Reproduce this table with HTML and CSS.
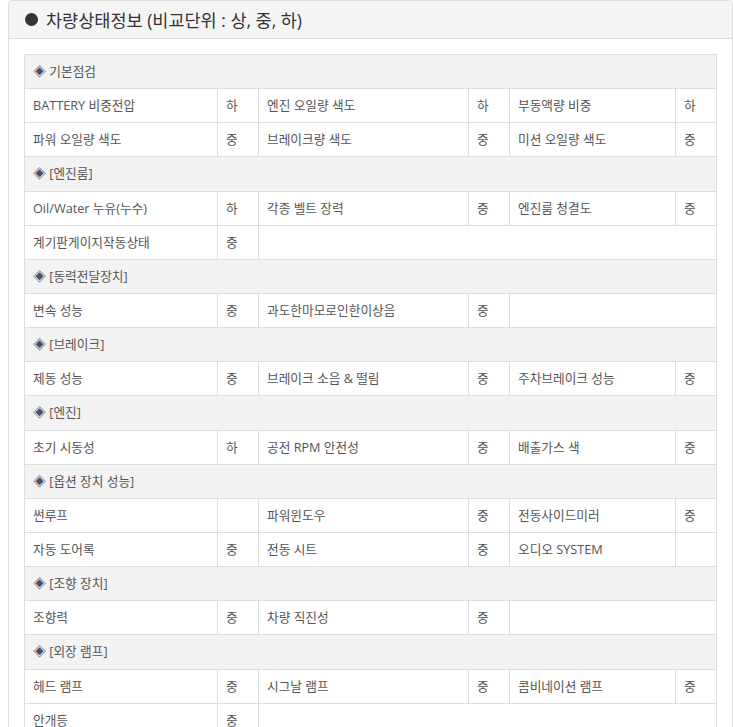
FILE: index.html
```html
<!DOCTYPE html>
<html lang="ko">
<head>
<meta charset="utf-8">
<title>차량상태정보</title>
<link rel="stylesheet" href="styles.css">
</head>
<body>
<div class="panel">
  <div class="panel-heading">
    <span class="bullet"></span>
    <h3 class="panel-title">차량상태정보 (비교단위 : 상, 중, 하)</h3>
  </div>
  <div class="panel-body">
    <table class="grid">
      <colgroup>
        <col class="c-name1"><col class="c-val"><col class="c-name2"><col class="c-val"><col class="c-name3"><col class="c-val">
      </colgroup>
      <tbody>
        <tr class="sec"><td colspan="6"><span class="dia">◈</span> 기본점검</td></tr>
        <tr><td>BATTERY 비중전압</td><td>하</td><td>엔진 오일량 색도</td><td>하</td><td>부동액량 비중</td><td>하</td></tr>
        <tr><td>파워 오일량 색도</td><td>중</td><td>브레이크량 색도</td><td>중</td><td>미션 오일량 색도</td><td>중</td></tr>
        <tr class="sec"><td colspan="6"><span class="dia">◈</span> [엔진룸]</td></tr>
        <tr><td>Oil/Water 누유(누수)</td><td>하</td><td>각종 벨트 장력</td><td>중</td><td>엔진룸 청결도</td><td>중</td></tr>
        <tr><td>계기판게이지작동상태</td><td>중</td><td colspan="4"></td></tr>
        <tr class="sec"><td colspan="6"><span class="dia">◈</span> [동력전달장치]</td></tr>
        <tr><td>변속 성능</td><td>중</td><td>과도한마모로인한이상음</td><td>중</td><td colspan="2"></td></tr>
        <tr class="sec"><td colspan="6"><span class="dia">◈</span> [브레이크]</td></tr>
        <tr><td>제동 성능</td><td>중</td><td>브레이크 소음 &amp; 떨림</td><td>중</td><td>주차브레이크 성능</td><td>중</td></tr>
        <tr class="sec"><td colspan="6"><span class="dia">◈</span> [엔진]</td></tr>
        <tr><td>초기 시동성</td><td>하</td><td>공전 RPM 안전성</td><td>중</td><td>배출가스 색</td><td>중</td></tr>
        <tr class="sec"><td colspan="6"><span class="dia">◈</span> [옵션 장치 성능]</td></tr>
        <tr><td>썬루프</td><td></td><td>파워윈도우</td><td>중</td><td>전동사이드미러</td><td>중</td></tr>
        <tr><td>자동 도어록</td><td>중</td><td>전동 시트</td><td>중</td><td>오디오 SYSTEM</td><td></td></tr>
        <tr class="sec"><td colspan="6"><span class="dia">◈</span> [조향 장치]</td></tr>
        <tr><td>조향력</td><td>중</td><td>차량 직진성</td><td>중</td><td colspan="2"></td></tr>
        <tr class="sec"><td colspan="6"><span class="dia">◈</span> [외장 램프]</td></tr>
        <tr><td>헤드 램프</td><td>중</td><td>시그날 램프</td><td>중</td><td>콤비네이션 램프</td><td>중</td></tr>
        <tr><td>안개등</td><td>중</td><td colspan="4"></td></tr>
      </tbody>
    </table>
  </div>
</div>
</body>
</html>
```

FILE: styles.css
```css
html, body {
  margin: 0;
  padding: 0;
  background: #fff;
}
body {
  font-family: "Open Sans", "Noto Sans CJK KR", sans-serif;
  color: #555;
}
.panel {
  margin-left: 8px;
  width: 725px;
  box-sizing: border-box;
  border: 1px solid #ddd;
  border-radius: 4px;
  background: #fff;
}
.panel-heading {
  display: flex;
  align-items: center;
  gap: 8px;
  height: 38px;
  box-sizing: border-box;
  padding: 0 16px;
  background: #f5f5f5;
  border-bottom: 1px solid #ddd;
  border-radius: 3px 3px 0 0;
}
.bullet {
  width: 13px;
  height: 13px;
  border-radius: 50%;
  background: #333;
  flex: none;
}
.panel-title {
  margin: 0;
  font-size: 17.5px;
  font-weight: normal;
  color: #333;
  line-height: 20px;
}
.panel-body {
  padding: 15px;
}
.grid {
  width: 693px;
  border-collapse: collapse;
  table-layout: fixed;
  font-size: 12.7px;
  line-height: 17.14px;
}
.c-name1 { width: 193px; }
.c-val { width: 41px; }
.c-name2 { width: 210px; }
.c-name3 { width: 166px; }
.grid td {
  border: 1px solid #ddd;
  padding: 8px 8px;
  color: #555;
  white-space: nowrap;
}
.grid tr.sec td {
  background: #f3f3f3;
}
.dia {
  color: #4a4f66;
}
```
